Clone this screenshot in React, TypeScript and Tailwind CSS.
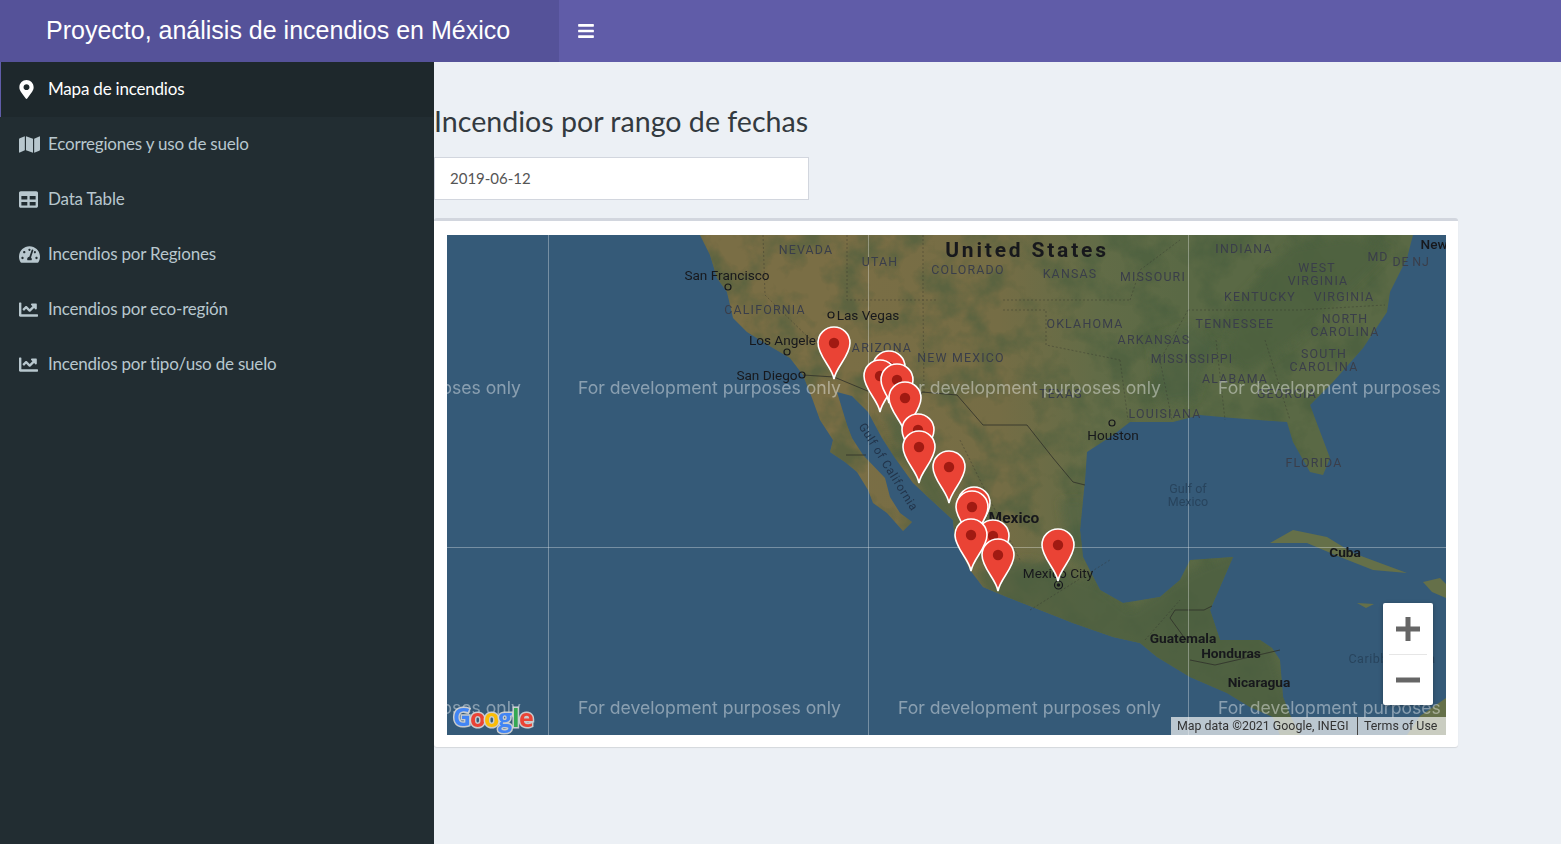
import { FaBars, FaChartLine, FaMap, FaMapMarkerAlt, FaTable, FaTachometerAlt } from "react-icons/fa";

const menu = [
  { label: "Mapa de incendios", icon: FaMapMarkerAlt, size: "-ml-[2px] text-[19px]", active: true },
  { label: "Ecorregiones y uso de suelo", icon: FaMap, size: "text-[21px]" },
  { label: "Data Table", icon: FaTable, size: "text-[19px]" },
  { label: "Incendios por Regiones", icon: FaTachometerAlt, size: "text-[21px]" },
  { label: "Incendios por eco-región", icon: FaChartLine, size: "text-[19px]" },
  { label: "Incendios por tipo/uso de suelo", icon: FaChartLine, size: "text-[19px]" },
];

const land =
  "M700,235 L710,255 717,278 727,292 733,318 747,332 773,348 790,358 803,375 812,398 820,420 833,440 830,452 845,462 857,472 868,490 873,503 887,513 903,531 912,522 900,513 890,497 885,478 863,455 852,438 847,425 837,392 852,396 868,412 882,438 895,458 913,483 928,497 953,520 955,540 970,570 983,587 1007,597 1040,610 1073,623 1113,637 1140,643 1157,657 1190,677 1227,693 1250,707 1273,717 1280,735 1300,735 1290,715 1283,697 1280,660 1272,648 1260,640 1220,640 1210,610 1220,587 1233,557 1190,560 1180,580 1160,597 1123,603 1100,590 1083,557 1080,530 1085,480 1087,452 1113,435 1130,422 1173,422 1200,415 1233,418 1287,422 1293,442 1310,472 1323,475 1330,458 1310,405 1333,382 1363,348 1387,312 1390,292 1407,258 1413,235 Z";

const cuba = "M1270,543 L1293,530 1327,537 1353,553 1407,573 1373,570 1340,557 1307,543 Z";

const labels: { t: string; x: number; y: number; s?: number; w?: number; c?: string; ls?: number }[] = [
  { t: "NEVADA", x: 806, y: 254, s: 12.4, ls: 1.2 },
  { t: "UTAH", x: 880, y: 266, s: 12.4, ls: 1.2 },
  { t: "COLORADO", x: 968, y: 274, s: 12.4, ls: 1.2 },
  { t: "KANSAS", x: 1070, y: 278, s: 12.4, ls: 1.2 },
  { t: "MISSOURI", x: 1153, y: 281, s: 12.4, ls: 1.2 },
  { t: "INDIANA", x: 1244, y: 253, s: 12.4, ls: 1.2 },
  { t: "WEST", x: 1317, y: 272, s: 12.4, ls: 1.2 },
  { t: "VIRGINIA", x: 1318, y: 285, s: 12.4, ls: 1.2 },
  { t: "KENTUCKY", x: 1260, y: 301, s: 12.4, ls: 1.2 },
  { t: "VIRGINIA", x: 1344, y: 301, s: 12.4, ls: 1.2 },
  { t: "MD", x: 1378, y: 261, s: 12.4, ls: 1 },
  { t: "DE", x: 1401, y: 266, s: 12.4, ls: 1 },
  { t: "NJ", x: 1421, y: 266, s: 12.4, ls: 1 },
  { t: "TENNESSEE", x: 1235, y: 328, s: 12.4, ls: 1.2 },
  { t: "NORTH", x: 1345, y: 323, s: 12.4, ls: 1.2 },
  { t: "CAROLINA", x: 1345, y: 336, s: 12.4, ls: 1.2 },
  { t: "OKLAHOMA", x: 1085, y: 328, s: 12.4, ls: 1.2 },
  { t: "ARKANSAS", x: 1154, y: 344, s: 12.4, ls: 1.2 },
  { t: "MISSISSIPPI", x: 1192, y: 363, s: 12.4, ls: 1.2 },
  { t: "SOUTH", x: 1324, y: 358, s: 12.4, ls: 1.2 },
  { t: "CAROLINA", x: 1324, y: 371, s: 12.4, ls: 1.2 },
  { t: "ALABAMA", x: 1235, y: 383, s: 12.4, ls: 1.2 },
  { t: "GEORGIA", x: 1287, y: 398, s: 12.4, ls: 1.2 },
  { t: "TEXAS", x: 1061, y: 398, s: 12.4, ls: 1.2 },
  { t: "LOUISIANA", x: 1165, y: 418, s: 12.4, ls: 1.2 },
  { t: "FLORIDA", x: 1314, y: 467, s: 12.4, ls: 1.2 },
  { t: "CALIFORNIA", x: 765, y: 314, s: 12.4, ls: 1.2 },
  { t: "ARIZONA", x: 882, y: 352, s: 12.4, ls: 1.2 },
  { t: "NEW MEXICO", x: 961, y: 362, s: 12.4, ls: 1.2 },
  { t: "United States", x: 1027, y: 257, s: 21, w: 700, c: "#17181c", ls: 2.8 },
  { t: "Mexico", x: 1014, y: 523, s: 15.5, w: 700, c: "#17181c" },
  { t: "San Francisco", x: 727, y: 280, s: 13.6, c: "#17181c" },
  { t: "Las Vegas", x: 868, y: 320, s: 13.6, c: "#17181c" },
  { t: "Los Angeles", x: 786, y: 345, s: 13.6, c: "#17181c" },
  { t: "San Diego", x: 767, y: 380, s: 13.6, c: "#17181c" },
  { t: "Houston", x: 1113, y: 440, s: 13.6, c: "#17181c" },
  { t: "Mexico City", x: 1058, y: 578, s: 13.6, c: "#17181c" },
  { t: "Cuba", x: 1345, y: 557, s: 13.7, w: 700, c: "#17181c" },
  { t: "Guatemala", x: 1183, y: 643, s: 13.7, w: 700, c: "#17181c" },
  { t: "Honduras", x: 1231, y: 658, s: 13.7, w: 700, c: "#17181c" },
  { t: "Nicaragua", x: 1259, y: 687, s: 13.7, w: 700, c: "#17181c" },
  { t: "New", x: 1434, y: 249, s: 13.6, w: 500, c: "#17181c" },
];

// dot position of each pin, back to front
const pins = [
  [834, 343], [889, 367], [880, 376], [897, 380], [905, 398], [918, 430], [919, 447], [949, 467],
  [974, 503], [972, 507], [993, 536], [971, 535], [998, 555], [1058, 545],
];

const cities = [
  [728, 287], [831, 315], [787, 352], [802, 375], [1112, 423],
];

function MapPin({ x, y }: { x: number; y: number }) {
  return (
    <g transform={`translate(${x},${y})`}>
      <path
        d="M0,36 C-2,24 -16,13 -16,0 A16,16 0 1 1 16,0 C16,13 2,24 0,36 Z"
        fill="#ea4335"
        stroke="#ffffff"
        strokeWidth="1.6"
      />
      <circle r="5.2" fill="#a11a12" />
    </g>
  );
}

function Terrain() {
  return (
    <svg viewBox="447 235 999 500" className="absolute inset-0 h-[500px] w-[999px]">
      <defs>
        <linearGradient id="landFill" gradientUnits="userSpaceOnUse" x1="850" y1="0" x2="1180" y2="0">
          <stop offset="0" stopColor="#7a6e45" />
          <stop offset="0.45" stopColor="#756d45" />
          <stop offset="0.75" stopColor="#626c47" />
          <stop offset="1" stopColor="#5a6945" />
        </linearGradient>
        <filter id="soft">
          <feGaussianBlur stdDeviation="4" />
        </filter>
        <filter id="grain" x="0" y="0" width="100%" height="100%" colorInterpolationFilters="sRGB">
          <feTurbulence type="fractalNoise" baseFrequency="0.03" numOctaves="4" seed="7" />
          <feColorMatrix values="0 0 0 0 0.27  0 0 0 0 0.36  0 0 0 0 0.24  3 0 0 0 -1.3" />
        </filter>
        <clipPath id="landClip">
          <path d={land} />
        </clipPath>
      </defs>
      <rect x="447" y="235" width="999" height="500" fill="#355a78" />
      <path d={land} fill="url(#landFill)" />
      <path d={cuba} fill="#657049" />
      <path d="M1423,582 L1440,578 1446,584 1446,598 1432,592 Z" fill="#657049" />
      <path d="M1357,603 L1374,604 1366,608 Z" fill="#657049" />
      <path d="M1407,735 L1420,716 1446,698 1446,735 Z" fill="#657049" />

      <g clipPath="url(#landClip)">
        <rect x="447" y="235" width="999" height="500" filter="url(#grain)" opacity="0.55" />
        <g filter="url(#soft)" fill="#4c6040">
          <path d="M1240,300 L1290,245 1350,235 1390,250 1340,300 1290,345 1245,375 1225,350 Z" opacity="0.8" />
          <path d="M1150,340 L1190,325 1215,345 1195,400 1160,405 Z" opacity="0.5" />
          <path d="M880,410 L905,420 950,500 1000,560 970,560 930,510 Z" opacity="0.7" />
          <path d="M975,570 L1030,560 1100,585 1130,610 1190,570 1240,550 1300,735 1240,735 1150,670 1060,635 990,605 Z" opacity="0.75" />
          <path d="M1060,500 L1085,500 1090,570 1070,560 Z" opacity="0.5" />
        </g>
      </g>

      <g fill="none" stroke="#33332e" strokeWidth="0.7" strokeDasharray="2 2" opacity="0.55">
        <path d="M763,235 L765,295 L816,345" />
        <path d="M847,235 V300 H937" />
        <path d="M923,235 V300 L924,395" />
        <path d="M1003,300 H1130" />
        <path d="M1003,310 H1046 V345 L1120,360" />
        <path d="M1130,300 L1140,270 1180,240" />
        <path d="M1120,360 L1128,420" />
        <path d="M1188,310 H1300" />
        <path d="M1188,310 L1160,360 1172,420" />
        <path d="M1216,340 L1225,420 M1265,340 L1290,420" />
        <path d="M1300,310 L1385,305" />
        <path d="M960,440 L1020,560 M1030,610 L1110,560 M1145,640 L1180,600" />
      </g>
      <g fill="none" stroke="#2f3029" strokeWidth="0.8">
        <path d="M803,375 L834,377 870,392 895,396 920,397 922,392 957,395 983,425 1007,425 1027,425 1053,458 1073,482 1085,485" />
        <path d="M1175,610 H1204 L1212,606 M1175,610 L1170,618 1186,640 M1190,660 L1215,665 1280,650" />
        <path d="M846,455 H866" />
      </g>

      <g stroke="#ffffff" strokeOpacity="0.32" strokeWidth="1">
        <path d="M548.5,235 V735 M868.5,235 V735 M1188.5,235 V735 M447,547.5 H1446" />
      </g>

      {cities.map(([x, y]) => (
        <circle key={x} cx={x} cy={y} r="3" fill="none" stroke="#17181c" strokeWidth="1.2" />
      ))}
      <circle cx="1058.5" cy="585" r="4" fill="none" stroke="#17181c" strokeWidth="1.2" />
      <circle cx="1058.5" cy="585" r="1.8" fill="#17181c" />

      <g fontFamily="Roboto, sans-serif" textAnchor="middle">
        {labels.map((l) => (
          <text
            key={l.t + l.x}
            x={l.x}
            y={l.y}
            fontSize={l.s}
            fontWeight={l.w ?? 400}
            letterSpacing={l.ls ?? 0}
            fill={l.c ?? "#3a3e4a"}
          >
            {l.t}
          </text>
        ))}
        <text x="885" y="469" fontSize="12" fill="#22344a" letterSpacing="0.6" transform="rotate(58 885 469)">
          Gulf of California
        </text>
        <text x="1188" y="493" fontSize="12.5" fill="#28445d">Gulf of</text>
        <text x="1188" y="506" fontSize="12.5" fill="#28445d">Mexico</text>
        <text x="1392" y="663" fontSize="12.5" fill="#28445d" letterSpacing="0.5">Caribbean Sea</text>
      </g>

      <g fontFamily="Inter, Roboto, sans-serif" fontSize="17.6" fill="#ffffff" fillOpacity="0.42">
        <text x="258" y="394">For development purposes only</text>
        <text x="578" y="394">For development purposes only</text>
        <text x="898" y="394">For development purposes only</text>
        <text x="1218" y="394">For development purposes only</text>
        <text x="258" y="714">For development purposes only</text>
        <text x="578" y="714">For development purposes only</text>
        <text x="898" y="714">For development purposes only</text>
        <text x="1218" y="714">For development purposes only</text>
      </g>

      {pins.map(([x, y]) => (
        <MapPin key={`${x}-${y}`} x={x} y={y} />
      ))}

      <g
        fontFamily="'Open Sans', sans-serif"
        fontSize="25"
        fontWeight="700"
        stroke="#d8d8d8"
        strokeWidth="3"
        paintOrder="stroke"
        strokeOpacity="0.9"
      >
        <text x="453" y="726" fill="#4285f4">G</text>
        <text x="470" y="727" fill="#ea4335">o</text>
        <text x="484" y="727" fill="#fbbc05">o</text>
        <text x="498" y="727" fill="#4285f4">g</text>
        <text x="512" y="727" fill="#34a853">l</text>
        <text x="519" y="727" fill="#ea4335">e</text>
      </g>
    </svg>
  );
}

export default function App() {
  return (
    <div className="h-[844px] w-full overflow-hidden bg-[#ecf0f5] font-['Lato',sans-serif]">
      <header className="flex h-[62px] bg-[#605ca8] text-white">
        <div className="flex w-[559px] items-center bg-[#555299] pl-[46px] font-['Liberation_Sans',sans-serif] text-[25px]">
          Proyecto, análisis de incendios en México
        </div>
        <button className="flex w-[54px] items-center justify-center">
          <FaBars className="text-[18px]" />
        </button>
      </header>

      <div className="flex h-[782px]">
        <aside className="w-[434px] shrink-0 bg-[#222d32]">
          {menu.map((m) => {
            const Icon = m.icon;
            return (
              <div
                key={m.label}
                className={
                  m.active
                    ? "flex h-[55px] items-center border-l border-[#605ca8] bg-[#1e282c] pl-[18px] text-white"
                    : "flex h-[55px] items-center pl-[19px] text-[#b8c7ce]"
                }
              >
                <span className="flex w-[29px] items-center">
                  <Icon className={m.size} />
                </span>
                <span className="pb-[2px] text-[17px] tracking-[-0.2px]">{m.label}</span>
              </div>
            );
          })}
        </aside>

        <main className="min-w-0 flex-1">
          <h2 className="mt-[39px] text-[28.6px] leading-[40px] text-[#333a40]">
            Incendios por rango de fechas
          </h2>
          <div className="mt-[16px] flex h-[43px] w-[375px] items-center border border-[#d2d6de] bg-white pl-[15px] text-[15px] text-[#555555]">
            2019-06-12
          </div>
          <section className="mt-[18px] h-[529px] w-[1024px] rounded-[3px] border-t-[3px] border-[#d2d6de] bg-white pb-[12px] pl-[13px] pr-[12px] pt-[14px] shadow-[0_1px_1px_rgba(0,0,0,0.1)]">
            <div className="relative h-[500px] w-[999px] overflow-hidden">
              <Terrain />
              <div className="absolute left-[936px] top-[368px] flex h-[102px] w-[50px] flex-col items-center rounded-[2px] bg-white text-[#666666] shadow-[0_1px_4px_rgba(0,0,0,0.3)]">
                <div className="flex h-[51px] w-full items-center justify-center">
                  <svg viewBox="0 0 24 24" className="h-[24px] w-[24px]">
                    <path d="M9.5,0 H14.5 V9.5 H24 V14.5 H14.5 V24 H9.5 V14.5 H0 V9.5 H9.5 Z" fill="currentColor" />
                  </svg>
                </div>
                <div className="h-px w-[38px] bg-[#e6e6e6]" />
                <div className="flex h-[50px] w-full items-center justify-center">
                  <svg viewBox="0 0 24 24" className="h-[24px] w-[24px]">
                    <path d="M0,9.5 H24 V14.5 H0 Z" fill="currentColor" />
                  </svg>
                </div>
              </div>
              <div className="absolute bottom-0 right-0 flex h-[18px] w-[275px] items-center bg-[#f5f5f5]/70 font-['Roboto',sans-serif] text-[12.4px] text-[#333333]">
                <span className="w-[186px] pl-[6px]">Map data ©2021 Google, INEGI</span>
                <span className="h-full border-l border-[#444444] pl-[6px]">Terms of Use</span>
              </div>
            </div>
          </section>
        </main>
      </div>
    </div>
  );
}
